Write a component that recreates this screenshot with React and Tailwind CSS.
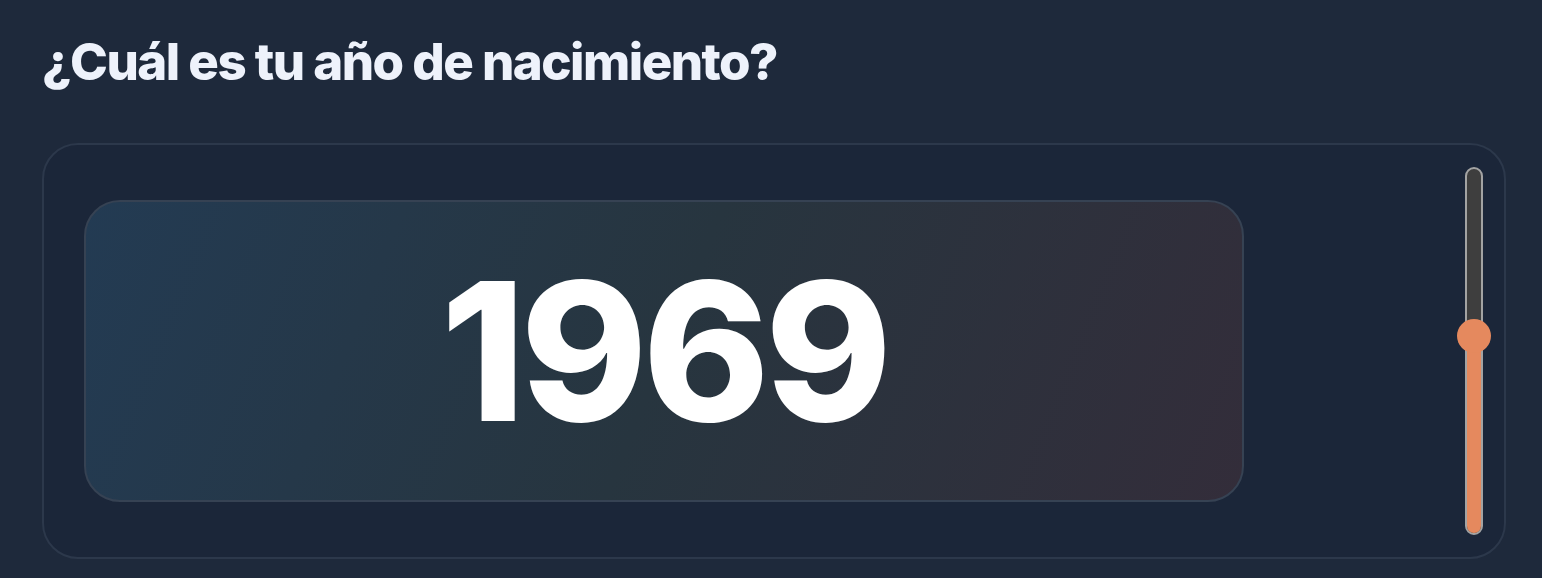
import { useState } from "react";

function SliderVertical({ value, min, max }) {
  const pct = ((value - min) / (max - min)) * 100;
  return (
    <div className="relative w-[18px] h-[368px] rounded-full border-2 border-[#a3a3a3] bg-[#3e3e3e] overflow-visible">
      <div
        className="absolute left-0 right-0 bottom-0 rounded-full bg-[#e5895e]"
        style={{ height: `${pct}%` }}
      />
      <div
        className="absolute left-1/2 w-[34px] h-[34px] -translate-x-1/2 translate-y-1/2 rounded-full bg-[#e5895e]"
        style={{ bottom: `${pct}%` }}
      />
    </div>
  );
}

export default function App() {
  const [ano] = useState(1969);

  return (
    <div
      className="w-[1542px] h-[578px] bg-[#1e293b] pl-[42px] pr-[36px] pt-[28px] overflow-hidden"
      style={{ fontFamily: "Inter, 'Noto Sans', sans-serif" }}
    >
      <h1 className="text-[51px] leading-[68px] font-extrabold tracking-[-0.03em] text-[#eef2fb]">
        ¿Cuál es tu año de nacimiento?
      </h1>

      <div className="mt-[47px] h-[416px] rounded-[36px] border-2 border-[#2c384b] bg-[#1b2639] flex items-center justify-between pl-[40px] pr-[21px]">
        {/* caja del número */}
        <div className="w-[1160px] h-[302px] rounded-[36px] border-2 border-[#364253] bg-[linear-gradient(112deg,#233b53_0%,#27353f_50%,#332d3a_100%)] flex items-center justify-center">
          <span className="text-[192px] leading-none font-extrabold tracking-[-0.025em] text-white">
            {ano}
          </span>
        </div>

        {/* slider */}
        <SliderVertical value={54} min={0} max={100} />
      </div>
    </div>
  );
}
